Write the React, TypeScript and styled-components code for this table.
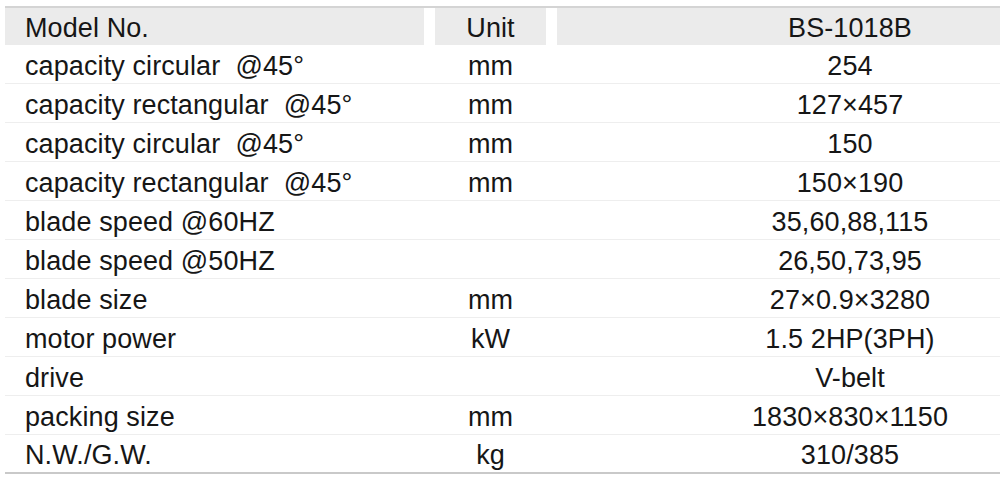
import React from "react";
import styled, { createGlobalStyle } from "styled-components";

const Global = createGlobalStyle`
  html, body { margin: 0; padding: 0; background: #fff; }
  body { overflow: hidden; width: 1000px; height: 478px; }
`;

const Wrap = styled.div`
  width: 1000px;
  height: 478px;
  overflow: hidden;
  padding: 6px 0 0 5px;
  box-sizing: border-box;
`;

const Table = styled.div`
  width: 1138px;
  border-top: 2px solid #d4d4d4;
  font-family: "Liberation Sans", Arial, Helvetica, sans-serif;
  font-size: 27px;
  letter-spacing: 0.1px;
  color: #161616;
`;

const Row = styled.div<{ $head?: boolean; $last?: boolean }>`
  display: grid;
  grid-template-columns: 419px 111px 586px;
  column-gap: 11px;
  height: ${(p) => (p.$head ? 37 : 39)}px;
  box-sizing: border-box;
  border-bottom: ${(p) =>
    p.$head ? "none" : p.$last ? "2px solid #c9c9c9" : "1px solid #eeeeee"};
`;

const Cell = styled.div<{ $head?: boolean; $align: "left" | "center" }>`
  display: flex;
  align-items: center;
  justify-content: ${(p) => (p.$align === "left" ? "flex-start" : "center")};
  padding-left: ${(p) => (p.$align === "left" ? "20px" : "0")};
  padding-top: 4px;
  box-sizing: border-box;
  background: ${(p) => (p.$head ? "#ebebeb" : "transparent")};
  white-space: pre;
  line-height: 1;
`;

const rows: [string, string, string][] = [
  ["capacity circular  @45°", "mm", "254"],
  ["capacity rectangular  @45°", "mm", "127×457"],
  ["capacity circular  @45°", "mm", "150"],
  ["capacity rectangular  @45°", "mm", "150×190"],
  ["blade speed @60HZ", "", "35,60,88,115"],
  ["blade speed @50HZ", "", "26,50,73,95"],
  ["blade size", "mm", "27×0.9×3280"],
  ["motor power", "kW", "1.5 2HP(3PH)"],
  ["drive", "", "V-belt"],
  ["packing size", "mm", "1830×830×1150"],
  ["N.W./G.W.", "kg", "310/385"],
];

export default function App() {
  return (
    <>
      <Global />
      <Wrap>
        <Table>
          <Row $head>
            <Cell $head $align="left">Model No.</Cell>
            <Cell $head $align="center">Unit</Cell>
            <Cell $head $align="center">BS-1018B</Cell>
          </Row>
          {rows.map((r, i) => (
            <Row key={i} $last={i === rows.length - 1}>
              <Cell $align="left">{r[0]}</Cell>
              <Cell $align="center">{r[1]}</Cell>
              <Cell $align="center">{r[2]}</Cell>
            </Row>
          ))}
        </Table>
      </Wrap>
    </>
  );
}
